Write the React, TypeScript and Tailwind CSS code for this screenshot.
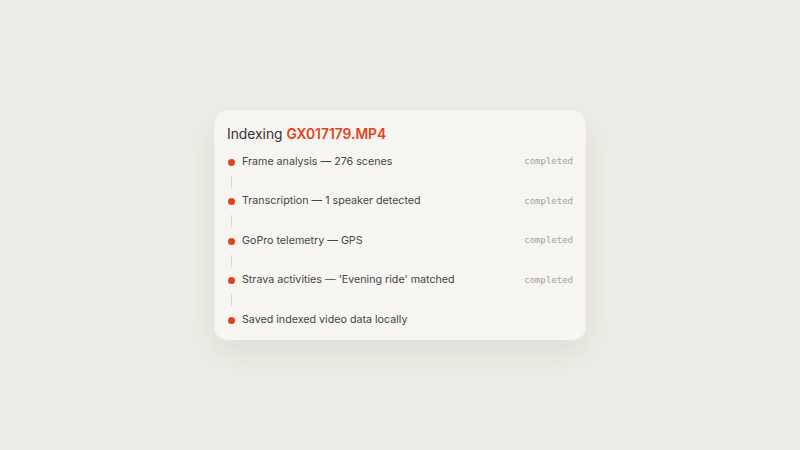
const steps = [
  { label: "Frame analysis — 276 scenes", status: "completed" },
  { label: "Transcription — 1 speaker detected", status: "completed" },
  { label: "GoPro telemetry — GPS", status: "completed" },
  { label: "Strava activities — 'Evening ride' matched", status: "completed" },
  { label: "Saved indexed video data locally", status: "" },
];

export default function App() {
  return (
    <main className="flex h-[450px] w-[800px] items-center justify-center bg-[#eeede7] font-['Inter',sans-serif]">
      <div className="w-[374px] rounded-[14px] border border-[#e6e3dc] bg-[#f6f5f1] px-[13px] pb-[10px] pt-[14px] shadow-[0_12px_32px_rgba(60,50,30,0.09)]">
        <div className="h-5 text-[13.8px] leading-5 text-[#333]">
          Indexing <span className="font-semibold text-[#e0441c]">GX017179.MP4</span>
        </div>
        <div className="mt-2">
          {steps.map((step, i) => (
            <div key={step.label}>
              <div className="flex h-5 items-center">
                <span className="ml-[1px] h-[7px] w-[7px] rounded-full bg-[#e0441c]" />
                <span className="ml-[7px] flex-1 text-[10.7px] text-[#464543]">{step.label}</span>
                {step.status && (
                  <span className="font-['DejaVu_Sans_Mono',monospace] text-[9px] text-[#a3a19c]">
                    {step.status}
                  </span>
                )}
              </div>
              {i < steps.length - 1 && (
                <div className="flex h-[19.5px] items-center">
                  <span className="ml-[4px] h-[12px] w-px bg-[#dcd9d2]" />
                </div>
              )}
            </div>
          ))}
        </div>
      </div>
    </main>
  );
}
